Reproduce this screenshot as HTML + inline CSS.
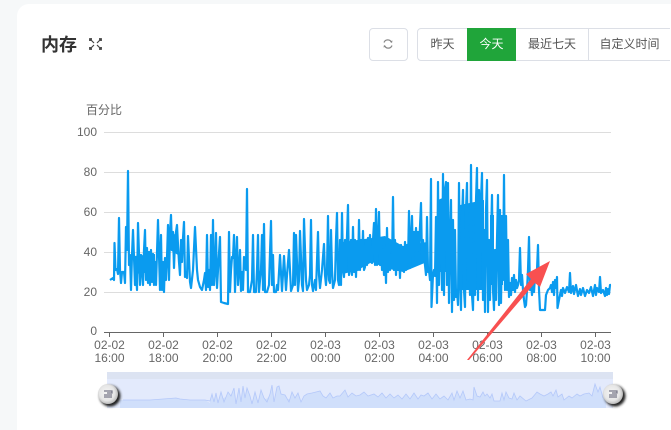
<!DOCTYPE html>
<html><head><meta charset="utf-8"><style>
html,body{margin:0;padding:0;width:671px;height:430px;overflow:hidden;background:#f6f8f9;font-family:"Liberation Sans","Noto Sans CJK SC",sans-serif}
#w{position:relative;width:671px;height:430px;overflow:hidden}
.card{position:absolute;left:17px;top:4px;width:654px;height:426px;background:#fff;border-radius:12px 0 0 0}
.t{position:absolute;left:41px;top:33px;font-size:18px;line-height:25px;font-weight:bold;color:#333}
.b{position:absolute;top:28px;height:31px;box-sizing:content-box;border:1px solid #dcdfe6;border-left:0;background:#fff;color:#555;font-size:12px;line-height:31px;text-align:center}
svg{position:absolute;left:0;top:0}
</style></head><body><div id="w">
<div class="card"></div>
<div class="t">内存</div>
<div class="b" style="left:369px;width:37px;border-left:1px solid #dcdfe6;border-radius:4px"></div>
<div class="b" style="left:417px;width:49px;border-left:1px solid #dcdfe6;border-radius:4px 0 0 4px">昨天</div>
<div class="b" style="left:467px;width:49px;background:#20a53a;border-color:#20a53a;color:#fff">今天</div>
<div class="b" style="left:516px;width:72px">最近七天</div>
<div class="b" style="left:589px;width:81px;border-right:0">自定义时间</div>
<svg width="671" height="430" viewBox="0 0 671 430" font-family="'Liberation Sans','Noto Sans CJK SC',sans-serif">
<g fill="none" stroke="#444" stroke-width="1.800"><path d="M90 41V39H92M99 39H101V41M101 47V49H99M92 49H90V47"/><path stroke-width="1.200" d="M91 40L94 43M100 40L97 43M100 48L97 45M91 48L94 45"/></g>
<g fill="none" stroke="#888" stroke-width="1.200"><path d="M384 42.500A4 4 0 0 1 391.500 42.500M392 45.500A4 4 0 0 1 384.500 45.500"/></g>
<path d="M390 41.500l2 1.500 .5-2.500M386 46.500l-2-1.500-.5 2.500" fill="#888"/>
<g stroke="#ddd" stroke-width="1"><path d="M104 132.500H611M104 172.500H611M104 212.500H611M104 252.500H611M104 292.500H611"/></g>
<path d="M104 332.500H611M109.500 332V337M163.500 332V337M217.500 332V337M271.500 332V337M325.500 332V337M379.500 332V337M433.500 332V337M487.500 332V337M541.500 332V337M595.500 332V337" stroke="#666" fill="none"/>
<g fill="#666" font-size="12">
<text x="86" y="114">百分比</text>
<g text-anchor="end"><text x="97" y="136">100</text><text x="97" y="176">80</text><text x="97" y="216">60</text><text x="97" y="256">40</text><text x="97" y="296">20</text><text x="97" y="335">0</text></g>
<g text-anchor="middle">
<text x="109.500" y="349">02-02</text><text x="109.500" y="362">16:00</text>
<text x="163.500" y="349">02-02</text><text x="163.500" y="362">18:00</text>
<text x="217.500" y="349">02-02</text><text x="217.500" y="362">20:00</text>
<text x="271.500" y="349">02-02</text><text x="271.500" y="362">22:00</text>
<text x="325.500" y="349">02-03</text><text x="325.500" y="362">00:00</text>
<text x="379.500" y="349">02-03</text><text x="379.500" y="362">02:00</text>
<text x="433.500" y="349">02-03</text><text x="433.500" y="362">04:00</text>
<text x="487.500" y="349">02-03</text><text x="487.500" y="362">06:00</text>
<text x="541.500" y="349">02-03</text><text x="541.500" y="362">08:00</text>
<text x="595.500" y="349">02-03</text><text x="595.500" y="362">10:00</text>
</g></g>
<path fill="#0a9bef" d="M134 256L155 254L155 272L134 274Z M170 232L178 236L178 255L170 250Z M343 242L372 238L385 236L403 246L427 242L427 262L403 272L385 268L372 262L358 270L343 274Z M438 200L449 195L449 272L438 272Z M460 205L484 200L484 290L460 290Z M490 215L494 215L494 285L490 285Z M499 215L503 215L503 285L499 285Z"/>
<path fill="none" stroke="#0a9bef" stroke-width="2.200" stroke-linejoin="round" d="M110 280L113 278L114 280L114.500 243L115.500 270L117 269L118 274L119 218L120 270L121 283L122 272L124 272L125 283L126 227L127 250L128 171L129 265L130 255L131 290L132 255L133 230L135 285L136 270L137 290L138 223L140 285L141 255L143 285L144 250L145 230L146 280L147 248L148 283L149 252L150 285L151 250L152 282L153 254L154 285L155 262L156 285L158 220L160 290L161 235L162 290L163 262L164 292L165 258L166 280L167 258L168 225L169 280L170 232L171 215L172 250L173 232L174 268L175 240L176 232L177 225L178 245L179 262L180 275L181 240L182 262L183 238L184 222L185 277L186 272L187 278L188 236L190 282L191 288L193 270L195 227L197 270L198 280L200 287L202 290L204 280L205 273L206 290L207 235L208 287L209 270L210 290L211 235L212 285L213 220L214 285L215 270L216 233L217 288L218 270L220 237L221 302L224 303L228 304L229 232L230 292L231 270L232 257L233 258L234 235L235 292L236 260L237 237L238 285L239 270L240 250L241 291L242 272L243 290L244 257L246 270L247 189L248 292L250 292L252 280L253 235L254 292L256 292L257 270L258 235L259 292L260 280L261 270L262 235L263 290L264 224L265 292L267 292L269 285L271 221L272 285L273 255L274 292L276 292L277 285L278 290L280 255L282 291L284 256L286 290L287 275L289 250L291 291L293 285L294 233L295 285L296 235L298 291L299 280L300 231L302 285L303 291L304 219L306 280L307 290L309 285L310 275L311 220L312 285L313 291L315 280L316 290L318 232L319 275L320 288L322 270L324 244L325 275L326 285L327 270L328 216L329 280L330 283L331 230L332 270L333 288L335 280L336 240L337 213L338 280L339 285L340 240L341 285L342 213L343 270L344 277L345 240L346 270L347 236L348 205L349 275L350 270L351 240L352 275L353 227L354 272L355 240L356 277L357 245L358 270L359 220L360 270L361 240L362 265L363 231L364 270L365 267L366 240L367 265L368 238L369 260L370 235L371 262L372 263L373 240L374 223L375 265L376 209L377 265L378 240L379 212L380 265L381 245L382 270L383 250L384 275L385 248L386 283L387 228L388 272L389 245L390 270L391 255L392 265L393 197L394 270L395 240L396 275L397 245L398 270L399 250L400 278L401 245L402 268L403 250L404 272L405 242L406 270L407 245L408 262L409 211L410 268L411 240L412 216L413 265L414 232L415 250L416 228L417 252L418 232L419 250L421 203L422 262L423 240L424 255L425 265L426 275L427 217L428 272L429 270L430 280L431 179L431.500 307L433 275L434 270L435 276L436 217L437 303L438 182L439 285L440 235L441 200L442 290L443 174L444 295L445 190L446 182L447 285L448 183L449 303L450 240L451 200L452 312L453 220L454 300L455 230L456 297L457 290L458 305L459 183L460 280L461 310L462 220L463 190L464 290L465 307L466 210L467 183L468 280L469 240L470 295L471 165L472 295L473 310L474 250L475 295L476 200L477 168L478 300L479 190L480 285L481 200L482 173L483 300L484 230L485 312L486 210L487 180L488 312L489 240L490 300L491 240L492 195L493 290L494 310L495 250L496 300L497 240L498 195L499 305L500 210L501 303L502 240L503 280L504 175L505 290L506 216L507 290L508 240L509 297L510 283L511 295L512 278L513 290L514 275L515 292L516 280L517 288L518 285L519 280L520 248L521 285L522 275L523 290L524 300L525 307L526 305L527 290L528 270L529 237L530 290L531 280L532 295L533 283L534 292L535 275L536 280L537 270L538 245L539 290L540 310L541 310L545 310L546 295L548 290L550 288L551 285L552 292L553 282L554 295L555 280L556 288L557 277L557.500 308L559 300L560 295L561 290L562 296L563 288L565 293L567 287L569 292L570 273L571 293L573 286L574 294L576 285L578 296L580 289L581 295L583 288L585 296L587 290L589 293L591 287L593 296L595 285L596 295L597 288L599 292L600 277L601 293L603 290L605 296L606 288L607 295L608 289L609 294L610 285L611 285"/>
<polygon points="467,360 531,279 526,274 550,261 540,287 535,283 469,360" fill="#f85050"/>
<rect x="107" y="372" width="506" height="36" fill="#e3eafc"/>
<rect x="107" y="372" width="506" height="7" fill="#dce3f2"/>
<path fill="#d0dffb" d="M120 408V400L150 400L176 398L180 399L190 400L205 400L210 403L218 400L226 397L235 400L250 401L266 399L270 396L274 401L284 399L292 399L300 402L310 400L322 399L330 401L348 401L350 408Z"/>
<path fill="#d0dffb" d="M210 408L210 401L212 394L214 402L216 393L218 403L221 392L224 402L228 392L231 396L234 388L236 404L239 388L241 402L243 386L245 398L247 388L250 396L252 404L255 392L258 403L261 390L264 398L267 402L270 394L272 385L274 402L277 387L279 386L281 394L285 395L289 402L292 392L295 398L298 393L301 402L304 396L307 394L312 393L316 392L320 391L323 396L326 398L330 393L333 398L337 396L340 396L345 390L348 397L352 393L356 396L360 395L364 392L368 396L374 394L378 397L382 393L386 398L390 394L394 398L398 395L402 399L406 394L410 399L414 393L418 399L421 395L424 396L428 393L432 399L436 394L440 399L444 396L448 400L452 393L454 400L457 391L460 398L463 391L466 400L470 399L473 400L474 387L477 396L480 397L483 392L485 396L487 394L490 398L492 394L494 401L500 401L502 393L504 400L506 392L509 398L512 399L514 393L517 400L520 396L526 401L532 398L537 392L540 394L544 396L548 394L551 392L553 396L556 390L558 397L562 394L564 400L569 396L572 398L577 394L580 396L584 394L589 393L592 396L595 384L598 392L600 387L603 398L606 398V408Z"/>
<path fill="none" stroke="#b4c8fa" stroke-width=".8" d="M123 400L150 400L176 398L180 399L190 400L205 400L210 401L212 394L214 402L216 393L218 403L221 392L224 402L228 392L231 396L234 388L236 404L239 388L241 402L243 386L245 398L247 388L250 396L252 404L255 392L258 403L261 390L264 398L267 402L270 394L272 385L274 402L277 387L279 386L281 394L285 395L289 402L292 392L295 398L298 393L301 402L304 396L307 394L312 393L316 392L320 391L323 396L326 398L330 393L333 398L337 396L340 396L345 390L348 397L352 393L356 396L360 395L364 392L368 396L374 394L378 397L382 393L386 398L390 394L394 398L398 395L402 399L406 394L410 399L414 393L418 399L421 395L424 396L428 393L432 399L436 394L440 399L444 396L448 400L452 393L454 400L457 391L460 398L463 391L466 400L470 399L473 400L474 387L477 396L480 397L483 392L485 396L487 394L490 398L492 394L494 401L500 401L502 393L504 400L506 392L509 398L512 399L514 393L517 400L520 396L526 401L532 398L537 392L540 394L544 396L548 394L551 392L553 396L556 390L558 397L562 394L564 400L569 396L572 398L577 394L580 396L584 394L589 393L592 396L595 384L598 392L600 387L603 398"/>
<defs><radialGradient id="g" cx="45%" cy="45%" r="55%"><stop offset="0" stop-color="#f6f6f6"/><stop offset=".7" stop-color="#e6e6e6"/><stop offset="1" stop-color="#bbb"/></radialGradient><filter id="f" x="-30%" y="-30%" width="160%" height="160%"><feGaussianBlur stdDeviation="1.200"/></filter></defs>
<circle cx="110" cy="396" r="10.500" fill="#222" filter="url(#f)"/>
<circle cx="108" cy="394" r="10" fill="url(#g)"/>
<path d="M104 391H112V393H107M104 395H112M104 397H112" stroke="#778" stroke-width="1.200" fill="none"/>
<circle cx="615" cy="396" r="10.500" fill="#222" filter="url(#f)"/>
<circle cx="613" cy="394" r="10" fill="url(#g)"/>
<path d="M609 391H617V393H612M609 395H617M609 397H617" stroke="#778" stroke-width="1.200" fill="none"/>
</svg>
</div></body></html>
